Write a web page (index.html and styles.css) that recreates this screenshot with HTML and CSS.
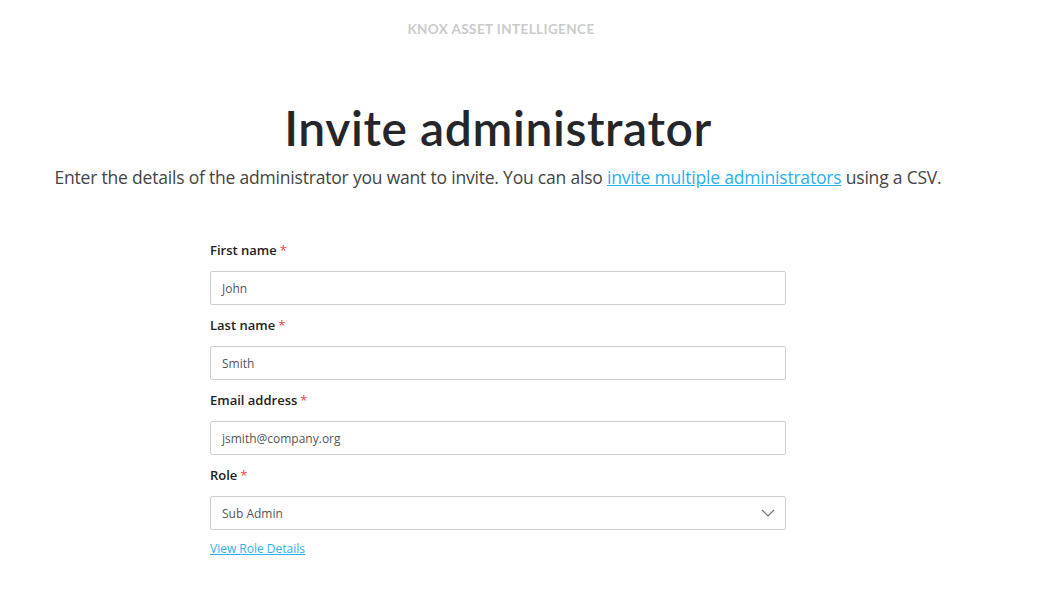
FILE: index.html
```html
<!DOCTYPE html>
<html>
<head>
<meta charset="utf-8">
<link rel="stylesheet" href="styles.css">
</head>
<body>
<main class="page">
  <div class="brand">KNOX ASSET INTELLIGENCE</div>
  <h1 class="title">Invite administrator</h1>
  <p class="lead">Enter the details of the administrator you want to invite. You can also <a href="#" class="link">invite multiple administrators</a> using a CSV.</p>
  <form class="form">
    <div class="field">
      <label class="label">First name<span class="req">*</span></label>
      <div class="input">John</div>
    </div>
    <div class="field">
      <label class="label">Last name<span class="req">*</span></label>
      <div class="input">Smith</div>
    </div>
    <div class="field">
      <label class="label">Email address<span class="req">*</span></label>
      <div class="input">jsmith@company.org</div>
    </div>
    <div class="field">
      <label class="label">Role<span class="req">*</span></label>
      <div class="input select">
        <span>Sub Admin</span>
        <svg class="chev" width="14" height="8" viewBox="0 0 14 8"><path d="M1 1l6 6 6-6" fill="none" stroke="#777" stroke-width="1.2"/></svg>
      </div>
      <a href="#" class="small-link">View Role Details</a>
    </div>
  </form>
</main>
</body>
</html>
```
FILE: styles.css
```css
html, body { margin: 0; padding: 0; background: #fff; }
.page {
  width: 996px;
  display: flex;
  flex-direction: column;
  align-items: center;
  font-family: "Open Sans", "Noto Sans", sans-serif;
}
.brand {
  margin-top: 21px;
  margin-left: 6px;
  font-family: "Lato", sans-serif;
  font-weight: 700;
  font-size: 13.5px;
  letter-spacing: 0.4px;
  color: #cbcbcb;
  line-height: 16px;
}
.title {
  margin: 62px 0 0;
  font-family: "Lato", sans-serif;
  font-weight: 600;
  font-size: 48px;
  line-height: 58px;
  color: #24262a;
  letter-spacing: 0.6px;
}
.lead {
  margin: 8px 0 0;
  font-family: "Open Sans", sans-serif;
  font-weight: 400;
  font-size: 17.5px;
  line-height: 24px;
  color: #444;
  letter-spacing: -0.2px;
}
.link { color: #2eaef0; text-decoration: underline; }
.form {
  width: 576px;
  margin-top: 51px;
  display: flex;
  flex-direction: column;
}
.field { display: flex; flex-direction: column; }
.label {
  font-size: 13px;
  font-weight: 600;
  color: #222;
  line-height: 20px;
  height: 20px;
  margin-bottom: 11px;
}
.req { color: #e8474b; margin-left: 3px; font-weight: 400; }
.input {
  box-sizing: border-box;
  height: 34px;
  border: 1px solid #cfcfcf;
  border-radius: 2px;
  padding: 0 11px;
  display: flex;
  align-items: center;
  font-size: 12px;
  color: #555;
  margin-bottom: 10px;
}
.select { justify-content: space-between; }
.chev { margin-right: -1px; }
.small-link {
  margin-top: 1px;
  font-size: 12px;
  color: #2eaef0;
  text-decoration: underline;
  align-self: flex-start;
  line-height: 16px;
}
```
